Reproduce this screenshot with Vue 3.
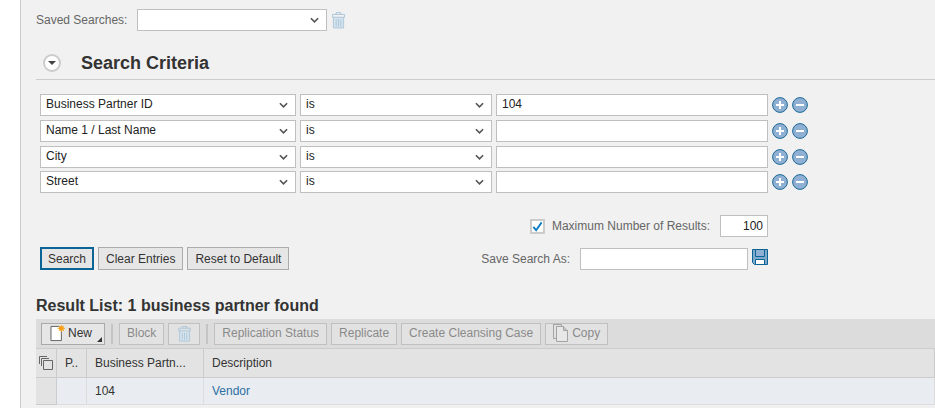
<template>
  <div class="page">
    <div class="saved-row">
      <label class="lbl">Saved Searches:</label>
      <div class="field select saved-select"><span></span><svg class="chev" viewBox="0 0 10 6"><path d="M1 1l4 4 4-4" /></svg></div>
      <svg class="trash" viewBox="0 0 14 18">
        <path class="trash-fill" d="M2 5.5h10V17H2z" />
        <path d="M4.5 2.5v-2h5v2M.5 2.5h13v3H.5zM1.5 5.5v11.5h11V5.5M4.5 7.5v8M7 7.5v8M9.5 7.5v8" />
      </svg>
    </div>

    <div class="criteria-head">
      <span class="toggle"><i></i></span>
      <h2>Search Criteria</h2>
    </div>

    <div class="criteria-rows">
      <div v-for="row in rows" :key="row.name" class="crit-row" :style="{ marginBottom: row.gap + 'px' }">
        <div class="field select c1"><span>{{ row.name }}</span><svg class="chev" viewBox="0 0 10 6"><path d="M1 1l4 4 4-4" /></svg></div>
        <div class="field select c2"><span>is</span><svg class="chev" viewBox="0 0 10 6"><path d="M1 1l4 4 4-4" /></svg></div>
        <div class="field c3"><span>{{ row.value }}</span></div>
        <svg class="round" viewBox="0 0 16 16"><circle cx="8" cy="8" r="7.4" /><path d="M8 4v8M4 8h8" /></svg>
        <svg class="round minus" viewBox="0 0 16 16"><circle cx="8" cy="8" r="7.4" /><path d="M4 8h8" /></svg>
      </div>
    </div>

    <div class="max-row">
      <span class="check"><svg viewBox="0 0 12 12"><path d="M1.5 6.5l3 3.5L10.5 1.5" /></svg></span>
      <label class="lbl">Maximum Number of Results:</label>
      <div class="field num"><span>100</span></div>
    </div>

    <div class="action-row">
      <div class="actions">
        <button class="btn primary">Search</button>
        <button class="btn">Clear Entries</button>
        <button class="btn">Reset to Default</button>
      </div>
      <div class="save-as">
        <label class="lbl">Save Search As:</label>
        <div class="field save-input"></div>
        <svg class="disk" viewBox="0 0 16 16">
          <path class="disk-body" d="M.5.5h15v15H2.5l-2-2z" />
          <path class="disk-top" d="M3.5 1v6.5h9V1" />
          <path class="disk-low" d="M3.5 15.5v-5h9v5z" />
        </svg>
      </div>
    </div>

    <h3 class="result-title">Result List: 1 business partner found</h3>

    <div class="toolbar">
      <button class="tbtn new">
        <svg class="new-ico" viewBox="0 0 18 18">
          <path d="M.5 1.5h8l3 3v12H.5z" fill="#fff" stroke="#5a5a5a" />
          <path d="M11.5 0v7.5M7.5 3.5h8M8.7 .8l5.6 5.6M14.3 .8L8.7 6.4" stroke="#f5a623" stroke-width="1" />
          <circle cx="11.5" cy="3.6" r="2.6" fill="#f7a11a" />
        </svg>
        New<i class="corner"></i>
      </button>
      <span class="sep"></span>
      <button class="tbtn off">Block</button>
      <button class="tbtn off trash-btn">
        <svg class="trash" viewBox="0 0 14 18">
          <path class="trash-fill" d="M2 5.5h10V17H2z" />
          <path d="M4.5 2.5v-2h5v2M.5 2.5h13v3H.5zM1.5 5.5v11.5h11V5.5M4.5 7.5v8M7 7.5v8M9.5 7.5v8" />
        </svg>
      </button>
      <span class="sep"></span>
      <button class="tbtn off">Replication Status</button>
      <button class="tbtn off">Replicate</button>
      <button class="tbtn off">Create Cleansing Case</button>
      <button class="tbtn off copy">
        <svg class="copy-ico" viewBox="0 0 16 18">
          <path d="M3.5 14.5H.5V.5h8v2" />
          <path d="M3.5 2.5h7l4 4v11h-11z" fill="#e8e8e8" />
          <path d="M10.5 2.5v4h4" fill="#c8c8c8" />
        </svg>
        Copy
      </button>
    </div>

    <div class="table">
      <div class="cell head sel">
        <svg viewBox="0 0 14 14"><path d="M.5 8V.5H8M2.5 10V2.5H10" /><path d="M4.5 4.5h9v9h-9z" /></svg>
      </div>
      <div class="cell head p">P..</div>
      <div class="cell head">Business Partn...</div>
      <div class="cell head">Description</div>
      <div class="cell gutter"></div>
      <div class="cell body"></div>
      <div class="cell body">104</div>
      <div class="cell body"><a>Vendor</a></div>
    </div>
  </div>
</template>

<script setup>
const rows = [
  { name: 'Business Partner ID', value: '104', gap: 4 },
  { name: 'Name 1 / Last Name', value: '', gap: 4 },
  { name: 'City', value: '', gap: 3 },
  { name: 'Street', value: '', gap: 0 }
];
</script>

<style>
html, body {
  margin: 0;
  background: #fff;
}
</style>

<style scoped>
.page {
  width: 915px;
  height: 408px;
  margin-left: 20px;
  border-left: 1px solid #ccc;
  background: #f1f1f1;
  padding-left: 15px;
  box-sizing: border-box;
  overflow: hidden;
  font-family: "Liberation Sans", Arial, sans-serif;
  font-size: 12px;
  color: #333;
}

.lbl {
  color: #666;
}

.field {
  height: 22px;
  box-sizing: border-box;
  border: 1px solid #bfbfbf;
  background: #fff;
  display: flex;
  align-items: center;
  padding: 0 5px;
  color: #222;
}

.select {
  justify-content: space-between;
}

.chev {
  width: 9px;
  height: 6px;
  margin-right: 2px;
  fill: none;
  stroke: #555;
  stroke-width: 1.8;
}

.saved-row {
  display: flex;
  align-items: center;
  padding-top: 9px;
  height: 22px;
}

.saved-select {
  width: 190px;
  margin-left: 10px;
}

.trash {
  width: 13px;
  height: 17px;
  margin-left: 5px;
  fill: none;
  stroke: #a9c4d8;
  stroke-width: 1;
}

.trash-fill {
  fill: #d6e4ee;
  stroke: none;
}

.criteria-head {
  display: flex;
  align-items: center;
  margin-top: 16px;
  height: 31px;
  padding-bottom: 1px;
  border-bottom: 1px solid #ccc;
}

.toggle {
  width: 18px;
  height: 18px;
  box-sizing: border-box;
  border: 2px solid #ccc;
  border-radius: 50%;
  background: #fff;
  margin-left: 7px;
  display: flex;
  align-items: center;
  justify-content: center;
}

.toggle i {
  border: 4px solid transparent;
  border-top: 4px solid #444;
  border-bottom: 0;
}

.criteria-head h2 {
  margin: 0 0 0 20px;
  font-size: 18px;
  line-height: 20px;
  font-weight: bold;
  color: #333;
}

.criteria-rows {
  margin-top: 14px;
  padding-left: 4px;
}

.crit-row {
  display: flex;
  align-items: center;
}

.crit-row .field {
  padding-bottom: 2px;
}

.crit-row .chev {
  margin-top: 2px;
}

.c1 { width: 256px; }
.c2 { width: 192px; margin-left: 4px; }
.c3 { width: 272px; margin-left: 4px; }

.round {
  width: 16px;
  height: 16px;
  margin-left: 4px;
  fill: #8fb0d2;
  stroke: #1d6a99;
  stroke-width: 1;
}

.round path {
  stroke: #fff;
  stroke-width: 2;
}

.max-row {
  display: flex;
  align-items: center;
  justify-content: flex-end;
  width: 732px;
  margin-top: 22px;
}

.check {
  width: 15px;
  height: 15px;
  box-sizing: border-box;
  border: 2px solid #ccc;
  background: #fff;
  margin-right: 7px;
  display: flex;
}

.check svg {
  width: 11px;
  height: 11px;
  fill: none;
  stroke: #0a7dc2;
  stroke-width: 2;
}

.num {
  width: 48px;
  margin-left: 10px;
  justify-content: flex-end;
  padding-right: 4px;
}

.action-row {
  display: flex;
  justify-content: space-between;
  width: 732px;
  margin-top: 10px;
  padding-left: 4px;
  box-sizing: border-box;
}

.actions {
  display: flex;
  gap: 4px;
}

.btn {
  height: 23px;
  padding: 0 7px;
  box-sizing: border-box;
  border: 1px solid #ababab;
  background: #e6e6e6;
  font: inherit;
  color: #333;
}

.btn.primary {
  border: 2px solid #0a6496;
  padding: 0 6px;
}

.save-as {
  display: flex;
  align-items: center;
  height: 22px;
  margin-top: 1px;
}

.save-input {
  width: 168px;
  margin-left: 10px;
}

.disk {
  width: 16px;
  height: 16px;
  margin-left: 4px;
  margin-bottom: 4px;
  stroke: #0a6496;
}

.disk-body { fill: #7fa8cb; }
.disk-top { fill: #8fb0d2; }
.disk-low { fill: #fff; }

.result-title {
  margin: 27px 0 0;
  font-size: 16px;
  line-height: 18px;
  font-weight: bold;
  color: #333;
}

.toolbar {
  display: flex;
  align-items: center;
  gap: 4px;
  height: 29px;
  margin-top: 4px;
  padding-left: 5px;
  background: #dcdcdc;
  border-bottom: 1px solid #ccc;
  box-sizing: content-box;
}

.tbtn {
  height: 22px;
  box-sizing: border-box;
  border: 1px solid #a9a9a9;
  background: #e6e6e6;
  padding: 0 7px 1px;
  font: inherit;
  color: #333;
  display: flex;
  align-items: center;
  flex: none;
}

.tbtn.off {
  border-color: #c0c0c0;
  background: #e2e2e2;
  color: #8a8a8a;
}

.new {
  position: relative;
  width: 64px;
  padding: 0 0 1px 8px;
}

.new-ico {
  width: 18px;
  height: 17px;
  margin-right: 0;
}

.corner {
  position: absolute;
  right: 2px;
  bottom: 2px;
  width: 0;
  height: 0;
  border-left: 5px solid transparent;
  border-bottom: 5px solid #333;
}

.sep {
  width: 2px;
  height: 20px;
  margin: 0 2px;
  background: #c4c4c4;
}

.trash-btn {
  width: 32px;
  padding: 0;
  justify-content: center;
}

.trash-btn .trash {
  margin: 0;
  width: 13px;
  height: 16px;
}

.copy-ico {
  width: 16px;
  height: 18px;
  margin-right: 3px;
  fill: none;
  stroke: #a3a3a3;
  stroke-width: 1;
}

.copy {
  width: 63px;
}

.table {
  display: grid;
  grid-template-columns: 21px 30px 117px 1fr;
  grid-template-rows: 29px 27px;
  width: 899px;
}

.cell {
  display: flex;
  align-items: center;
  box-sizing: border-box;
  padding-left: 8px;
  border-right: 1px solid #ccc;
  border-bottom: 1px solid #ccc;
  color: #333;
}

.head {
  background: #e3e3e3;
}

.p {
  padding-left: 8px;
}

.sel {
  padding-left: 3px;
}

.sel svg {
  width: 14px;
  height: 14px;
  fill: none;
  stroke: #666;
  stroke-width: 1;
}

.gutter {
  background: #e3e3e3;
}

.body {
  background: #e9edf1;
  border-bottom-color: #dcdcdc;
  border-right-color: #dcdcdc;
}

.body a {
  color: #2d6ea3;
}
</style>
